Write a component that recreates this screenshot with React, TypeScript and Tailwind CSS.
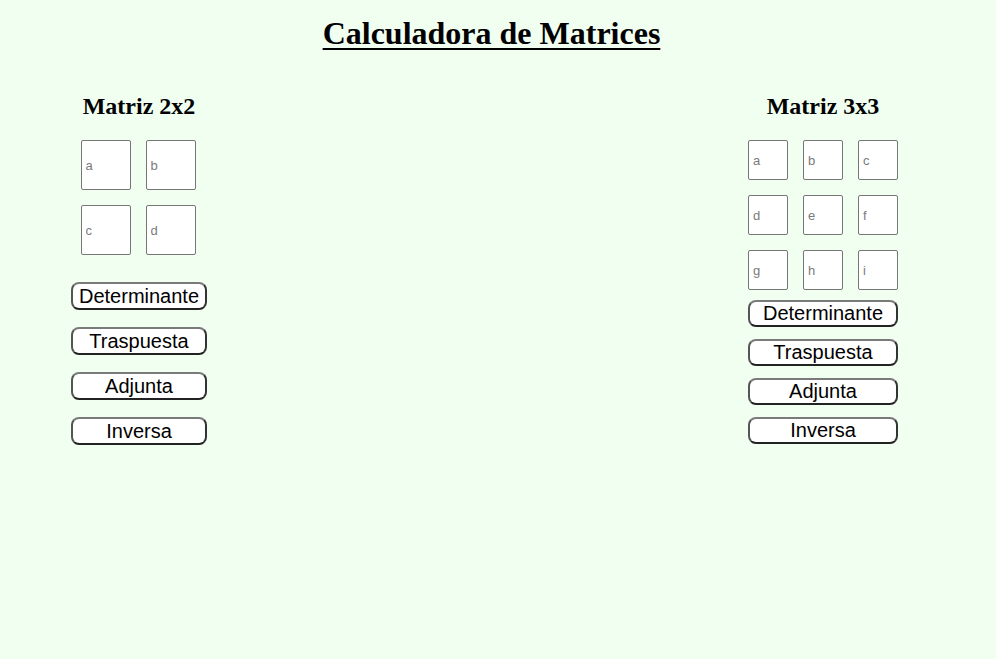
const serif = { fontFamily: '"Liberation Serif", "Times New Roman", serif' };

const btn2 =
  'block w-[136px] h-[28px] rounded-[8px] border-2 border-t-[#7a7a7a] border-l-[#555] border-r-[#333] border-b-[#222] bg-white text-black text-[20px] leading-[22px] font-["Liberation_Sans",Arial,sans-serif]';
const btn3 =
  'block w-[150px] h-[27px] rounded-[8px] border-2 border-t-[#7a7a7a] border-l-[#555] border-r-[#333] border-b-[#222] bg-white text-black text-[20px] leading-[21px] font-["Liberation_Sans",Arial,sans-serif]';

function Cell({ label, size }: { label: string; size: 'lg' | 'sm' }) {
  return (
    <input
      placeholder={label}
      className={`${size === 'lg' ? 'w-[50px] h-[50px]' : 'w-[40px] h-[40px]'} border border-[#767676] rounded-[2px] bg-white pl-[4px] text-[13px] font-["Liberation_Sans",Arial,sans-serif] placeholder:text-[#7a7a7a] outline-none`}
    />
  );
}

export default function App() {
  const ops = ['Determinante', 'Traspuesta', 'Adjunta', 'Inversa'];
  return (
    <div className="min-h-[659px] w-full bg-[#f0fff0] text-black">
      <h1
        style={serif}
        className="w-[983px] pt-[15px] text-center text-[32px] leading-[36px] font-bold underline decoration-[2px] underline-offset-[4px]"
      >
        Calculadora de Matrices
      </h1>

      <div className="flex pt-[41px]">
        {/* 2x2 */}
        <div className="ml-[71px] w-[136px] flex flex-col items-center">
          <h2 style={serif} className="text-[24px] leading-[28px] font-bold">
            Matriz 2x2
          </h2>
          <div className="mt-[20px] -ml-[2px] grid grid-cols-2 gap-[15px]">
            {['a', 'b', 'c', 'd'].map((l) => (
              <Cell key={l} label={l} size="lg" />
            ))}
          </div>
          <div className="mt-[27px] flex flex-col gap-[17px]">
            {ops.map((o) => (
              <button key={o} className={btn2}>
                {o}
              </button>
            ))}
          </div>
        </div>

        {/* 3x3 */}
        <div className="ml-[541px] w-[150px] flex flex-col items-center">
          <h2 style={serif} className="text-[24px] leading-[28px] font-bold">
            Matriz 3x3
          </h2>
          <div className="mt-[20px] grid grid-cols-3 gap-[15px]">
            {['a', 'b', 'c', 'd', 'e', 'f', 'g', 'h', 'i'].map((l) => (
              <Cell key={l} label={l} size="sm" />
            ))}
          </div>
          <div className="mt-[10px] flex flex-col gap-[12px]">
            {ops.map((o) => (
              <button key={o} className={btn3}>
                {o}
              </button>
            ))}
          </div>
        </div>
      </div>
    </div>
  );
}
